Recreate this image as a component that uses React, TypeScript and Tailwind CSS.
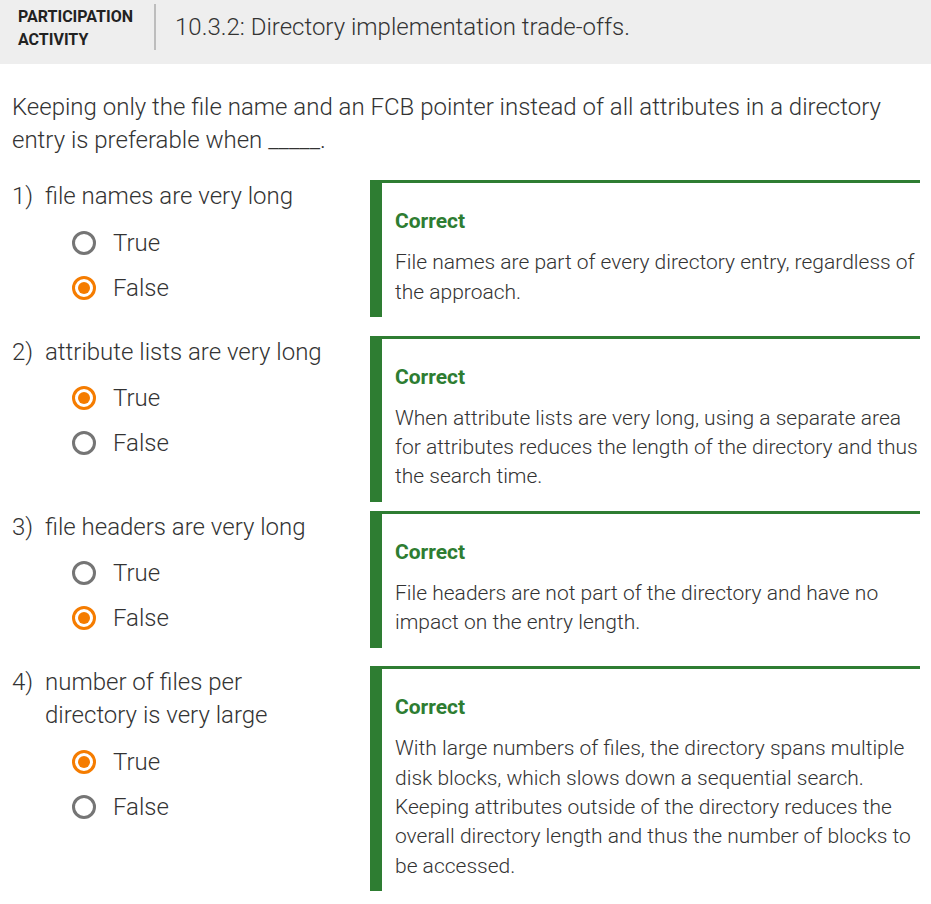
import React from "react"

type Question = {
	num: string
	text: string
	answer: "True" | "False"
	feedback: string
}

const questions: Question[] = [
	{
		num: "1)",
		text: "file names are very long",
		answer: "False",
		feedback: "File names are part of every directory entry, regardless of the approach.",
	},
	{
		num: "2)",
		text: "attribute lists are very long",
		answer: "True",
		feedback: "When attribute lists are very long, using a separate area for attributes reduces the length of the directory and thus the search time.",
	},
	{
		num: "3)",
		text: "file headers are very long",
		answer: "False",
		feedback: "File headers are not part of the directory and have no impact on the entry length.",
	},
	{
		num: "4)",
		text: "number of files per directory is very large",
		answer: "True",
		feedback: "With large numbers of files, the directory spans multiple disk blocks, which slows down a sequential search. Keeping attributes outside of the directory reduces the overall directory length and thus the number of blocks to be accessed.",
	},
]

function Radio({ label, checked }: { label: string; checked: boolean }) {
	return (
		<div className="flex items-center h-[45px] pl-[60px]">
			{checked ? (
				<span className="w-[24px] h-[24px] rounded-full border-[3px] border-[#f57c00] flex items-center justify-center">
					<span className="w-[12px] h-[12px] rounded-full bg-[#f57c00]" />
				</span>
			) : (
				<span className="w-[24px] h-[24px] rounded-full border-[3px] border-[#757575]" />
			)}
			<span className="ml-[17px]">{label}</span>
		</div>
	)
}

function QuestionRow({ q }: { q: Question }) {
	return (
		<div className="flex items-start mb-[9px]">
			<div className="w-[358px] pb-[16.5px]">
				<div className="flex leading-[33px]">
					<span className="w-[33px] shrink-0">{q.num}</span>
					<span className="w-[280px]">{q.text}</span>
				</div>
				<div className="mt-[7px]">
					<Radio label="True" checked={q.answer === "True"} />
					<Radio label="False" checked={q.answer === "False"} />
				</div>
			</div>
			<div className="flex-1 border-l-[12px] border-t-[3px] border-[#2e7d32] pl-[13px] pt-[24px] pb-[10px] text-[21px] leading-[29.3px]">
				<div className="font-bold text-[#2e7d32] mb-[12px]">Correct</div>
				<div>{q.feedback}</div>
			</div>
		</div>
	)
}

export default function App() {
	return (
		<div className="min-h-screen bg-white text-[#333333] font-light" style={{ fontFamily: "Roboto, 'Liberation Sans', sans-serif" }}>
			<div className="bg-[#eeeeee] h-[64px] flex items-start pt-[4px]">
				<div className="pl-[18px] pr-[21px] pt-[1px] text-[16px] leading-[23px] font-bold text-[#222222] uppercase">
					<div>Participation</div>
					<div>Activity</div>
				</div>
				<div className="w-[2px] h-[46px] bg-[#bdbdbd]" />
				<div className="pl-[19px] pt-[8px] text-[24px] leading-[30px] text-[#333333]">10.3.2: Directory implementation trade-offs.</div>
			</div>
			<div className="px-3 pr-[11px]">
				<p className="text-[24px] leading-[33px] mt-[27px] mb-[23px]">
					Keeping only the file name and an FCB pointer instead of all attributes in a directory entry is preferable when _____.
				</p>
				<div className="text-[24px]">
					{questions.map((q) => (
						<QuestionRow key={q.num} q={q} />
					))}
				</div>
			</div>
		</div>
	)
}
